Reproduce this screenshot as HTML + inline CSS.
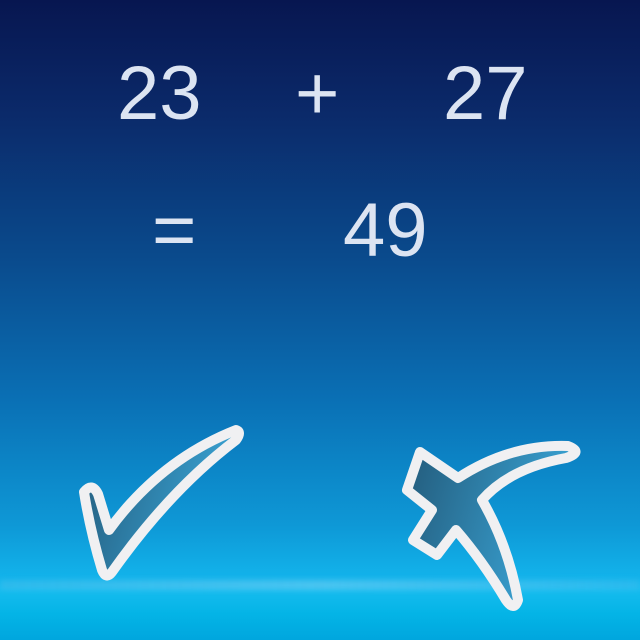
<!DOCTYPE html>
<html><head><style>
html,body{margin:0;padding:0}
body{width:640px;height:640px;overflow:hidden;position:relative;
background:linear-gradient(180deg,#071650 0%,#0b2a6a 18%,#0a4a8c 40%,#0a6fb4 62%,#0e98d6 82%,#12b2ea 90%,#16bcef 92%,#04b4e6 96%,#00a6de 100%);
font-family:"Liberation Sans",sans-serif;color:#dce4f2}
.t{position:absolute;font-size:76px;line-height:1}
</style></head><body>
<div style="position:absolute;left:0;top:580px;width:640px;height:10px;background:linear-gradient(90deg,rgba(90,190,235,.35),rgba(140,210,245,.45),rgba(90,190,240,.3));filter:blur(3px)"></div>
<div class="t" style="left:117px;top:56px">23</div>
<div class="t" style="left:295px;top:56px">+</div>
<div class="t" style="left:443px;top:56px">27</div>
<div class="t" style="left:152px;top:193px">=</div>
<div class="t" style="left:343px;top:193px">49</div>
<svg width="640" height="640" style="position:absolute;left:0;top:0">
<defs>
<linearGradient id="g" x1="0" y1="0" x2="1" y2="0.3">
<stop offset="0" stop-color="#235a7a"/><stop offset="1" stop-color="#3aa6d8"/></linearGradient>
</defs>
<g stroke="#f0f0f2" stroke-width="10" stroke-linejoin="round" fill="url(#g)">
<path d="M84 492 Q92 482 98 494 L109 530 Q160 460 236 430 Q242 432 236 440 Q170 490 112 572 Q106 580 102 570 Q90 530 84 492Z"/>
<path d="M420 452 L458 478 Q510 444 568 446 Q584 452 566 458 Q510 468 482 500 Q508 545 518 600 Q514 612 506 600 Q482 560 456 530 L437 555 L413 540 L432 510 L407 490 Z"/>
</g>
</svg>
</body></html>
